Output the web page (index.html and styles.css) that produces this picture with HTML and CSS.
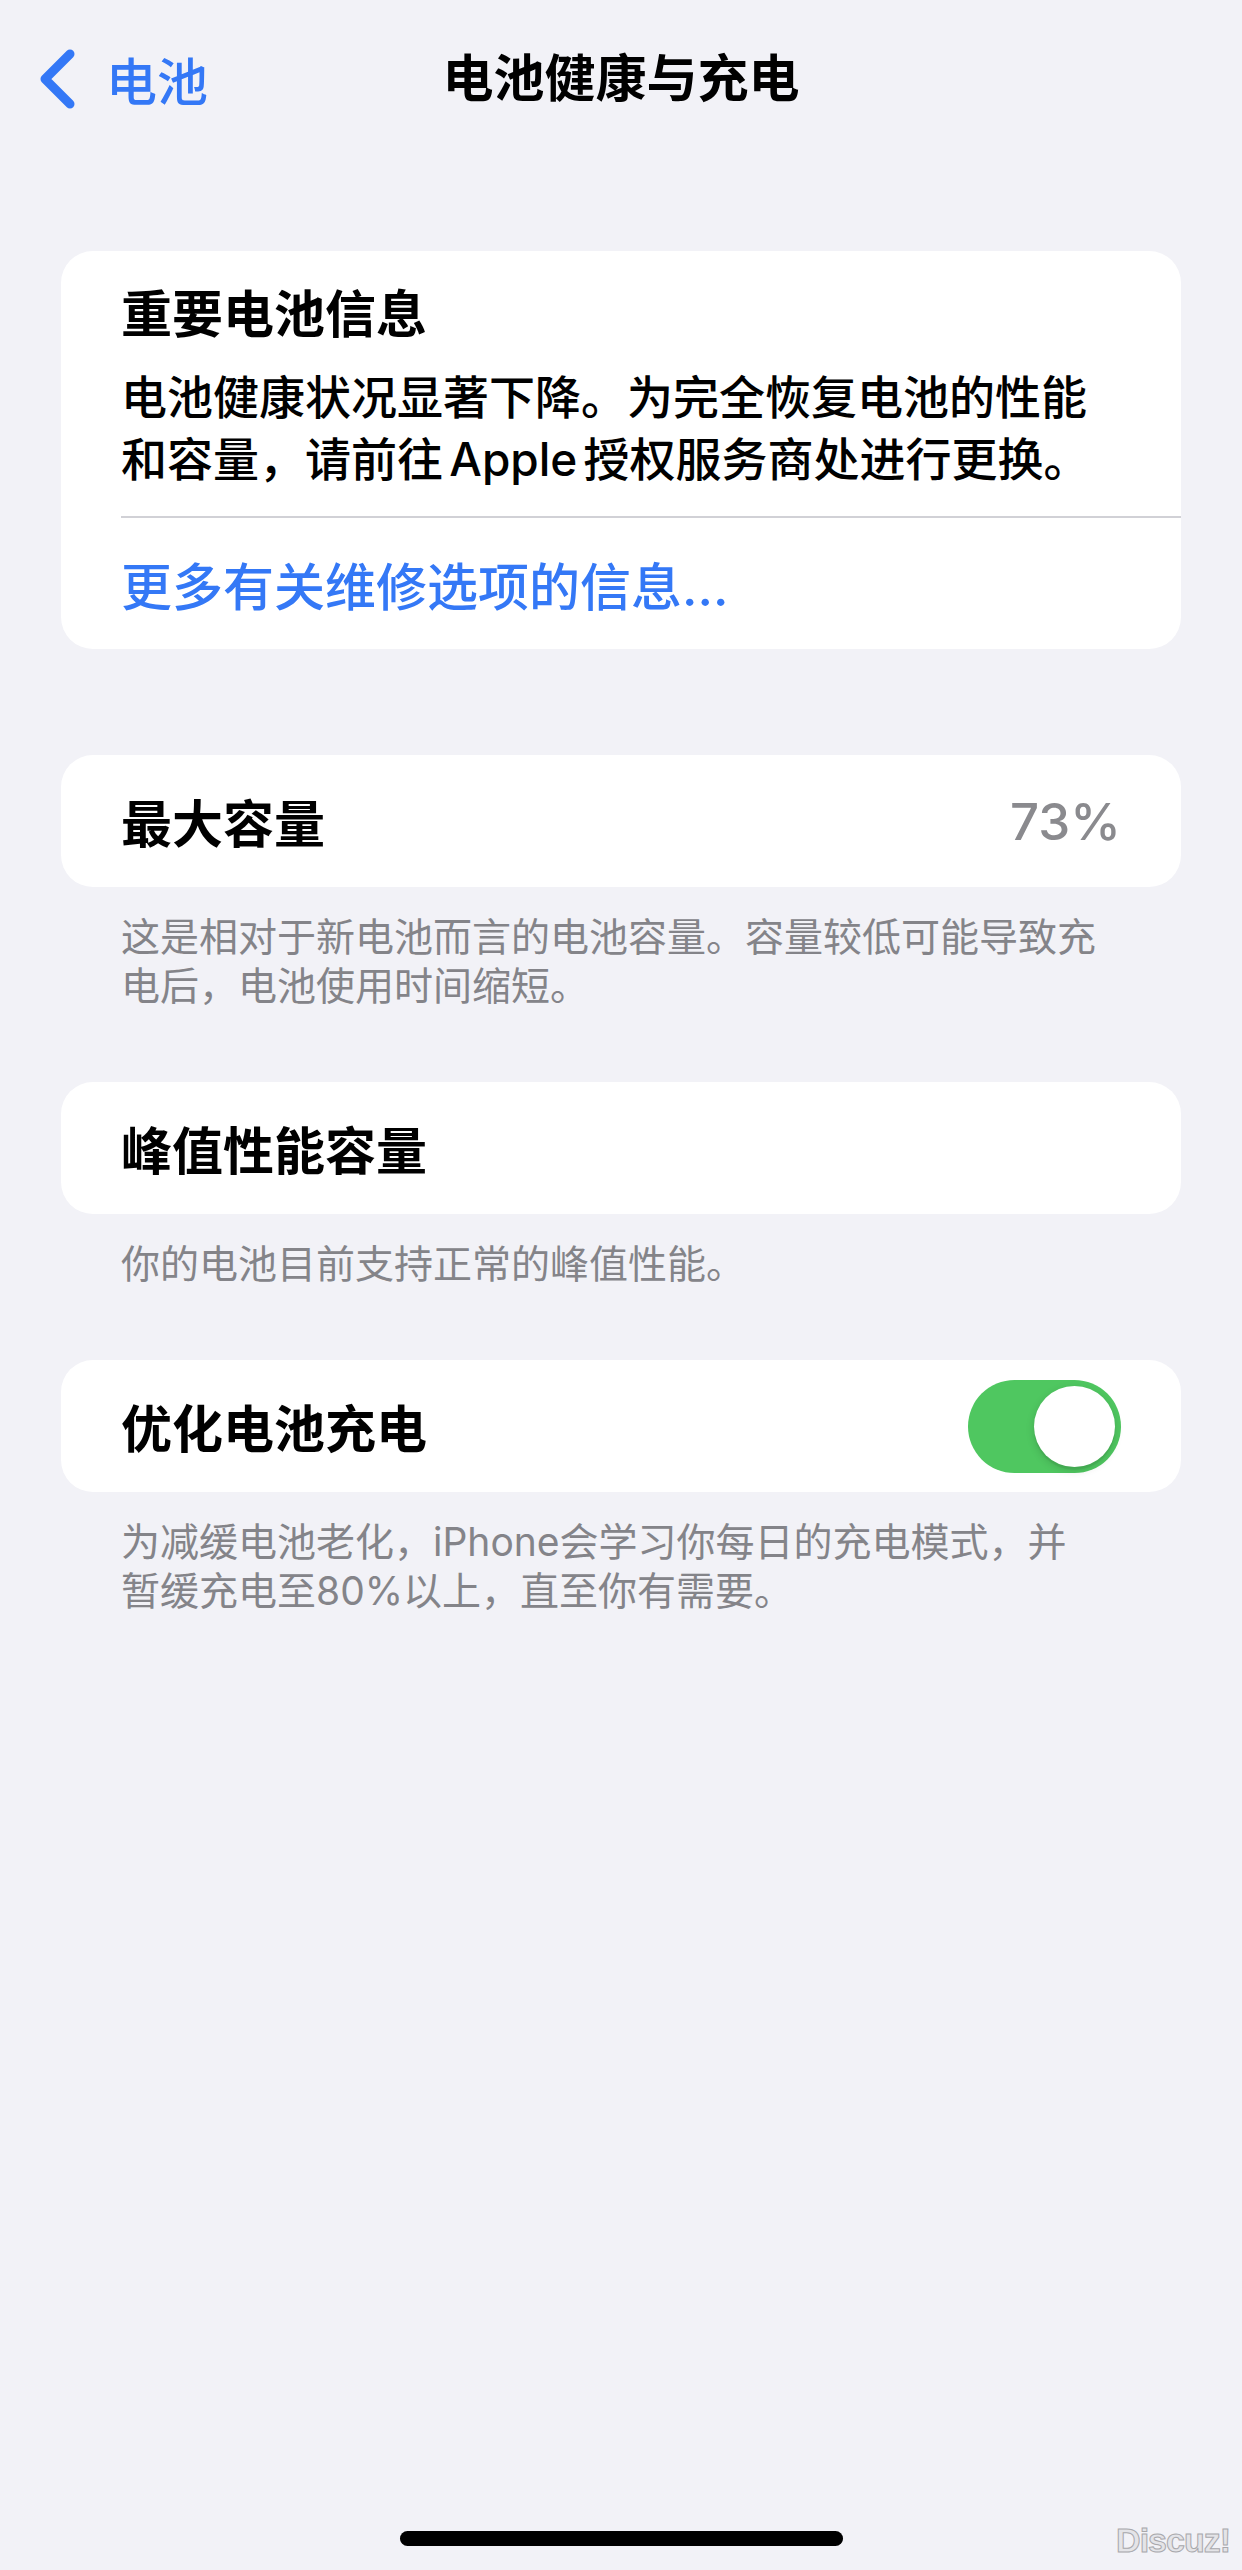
FILE: index.html
```html
<!DOCTYPE html>
<html lang="zh-CN">
<head>
    <meta charset="UTF-8">
    <meta name="viewport" content="width=device-width, initial-scale=1.0">
    <title>电池健康与充电</title>
    <link rel="stylesheet" href="styles.css">
</head>
<body>
    <div class="screen">
        <header class="nav">
            <a class="back" href="#">
                <svg class="chevron" viewBox="0 0 36 60" width="36" height="60">
                    <polyline points="31,5 6,30 31,55" />
                </svg>
                <span>电池</span>
            </a>
            <h1 class="nav-title">电池健康与充电</h1>
            <span></span>
        </header>

        <main class="content">
            <section class="group group-notice">
                <div class="card">
                    <div class="notice">
                        <h2>重要电池信息</h2>
                        <p>电池健康状况显著下降。为完全恢复电池的性能和容量，请前往 Apple 授权服务商处进行更换。</p>
                    </div>
                    <a class="row row-link" href="#">更多有关维修选项的信息...</a>
                </div>
            </section>

            <section class="group">
                <div class="card">
                    <div class="row">
                        <span class="label">最大容量</span>
                        <span class="value">73%</span>
                    </div>
                </div>
                <p class="footer">这是相对于新电池而言的电池容量。容量较低可能导致充电后，电池使用时间缩短。</p>
            </section>

            <section class="group">
                <div class="card">
                    <div class="row">
                        <span class="label">峰值性能容量</span>
                    </div>
                </div>
                <p class="footer">你的电池目前支持正常的峰值性能。</p>
            </section>

            <section class="group">
                <div class="card">
                    <div class="row">
                        <span class="label">优化电池充电</span>
                        <span class="switch on"><span class="knob"></span></span>
                    </div>
                </div>
                <p class="footer">为减缓电池老化，iPhone会学习你每日的充电模式，并<br>暂缓充电至80%以上，直至你有需要。</p>
            </section>
        </main>

        <div class="home-indicator"></div>
        <div class="watermark">Discuz!</div>
    </div>
</body>
</html>
```

FILE: styles.css
```css
body {
    margin: 0;
    background-color: #f2f2f7;
    font-family: "Inter", "Noto Sans CJK SC", sans-serif;
    color: #000;
}
.screen {
    position: relative;
    width: 1242px;
    min-height: 2570px;
    overflow: hidden;
}

/* navigation bar */
.nav {
    display: grid;
    grid-template-columns: 1fr auto 1fr;
    align-items: center;
    height: 88px;
    margin-top: 35px;
}
.back {
    display: flex;
    align-items: center;
    gap: 31px;
    padding-left: 39px;
    color: #3478f6;
    text-decoration: none;
    font-size: 51px;
    font-weight: 500;
}
.chevron polyline {
    fill: none;
    stroke: #3478f6;
    stroke-width: 9;
    stroke-linecap: round;
    stroke-linejoin: round;
}
.nav-title {
    margin: 0;
    font-size: 51px;
    font-weight: 600;
    line-height: 88px;
}

/* grouped list */
.content {
    padding: 128px 61px 0;
}
.group {
    margin-bottom: 72px;
}
.group-notice {
    margin-bottom: 106px;
}
.card {
    background: #fff;
    border-radius: 32px;
    overflow: hidden;
}
.notice {
    margin-left: 60px;
    padding: 33px 60px 26px 0;
    border-bottom: 2px solid #d1d1d6;
}
.notice h2 {
    margin: 0 0 20px;
    font-size: 51px;
    font-weight: 600;
    line-height: 62px;
}
.notice p {
    margin: 0;
    font-size: 46px;
    font-weight: 500;
    line-height: 62px;
    word-spacing: -6px;
}
.row {
    display: flex;
    align-items: center;
    justify-content: space-between;
    height: 132px;
    padding: 0 60px;
    font-size: 51px;
    font-weight: 600;
}
.row-link {
    color: #3478f6;
    text-decoration: none;
    height: 131px;
    font-weight: 500;
}
.value {
    color: #8a8a8e;
    font-weight: 500;
}
.footer {
    margin: 0;
    padding: 25px 60px 0;
    font-size: 39px;
    line-height: 49px;
    color: #848489;
}

/* toggle */
.switch {
    position: relative;
    width: 153px;
    height: 93px;
    border-radius: 47px;
    background: #e9e9ea;
}
.switch.on {
    background: #4fc760;
}
.switch .knob {
    position: absolute;
    top: 6px;
    left: 6px;
    width: 81px;
    height: 81px;
    border-radius: 50%;
    background: #fff;
    box-shadow: 0 3px 8px rgba(0,0,0,0.15), 0 3px 1px rgba(0,0,0,0.06);
}
.switch.on .knob {
    left: 66px;
}

.home-indicator {
    position: absolute;
    left: 400px;
    bottom: 24px;
    width: 443px;
    height: 15px;
    border-radius: 8px;
    background: #000;
}
.watermark {
    position: absolute;
    right: 12px;
    bottom: 10px;
    font-family: "Liberation Sans", sans-serif;
    font-size: 34px;
    font-weight: bold;
    letter-spacing: -1px;
    color: #e4e4e8;
    -webkit-text-stroke: 1px #a8a8ac;
}
```
